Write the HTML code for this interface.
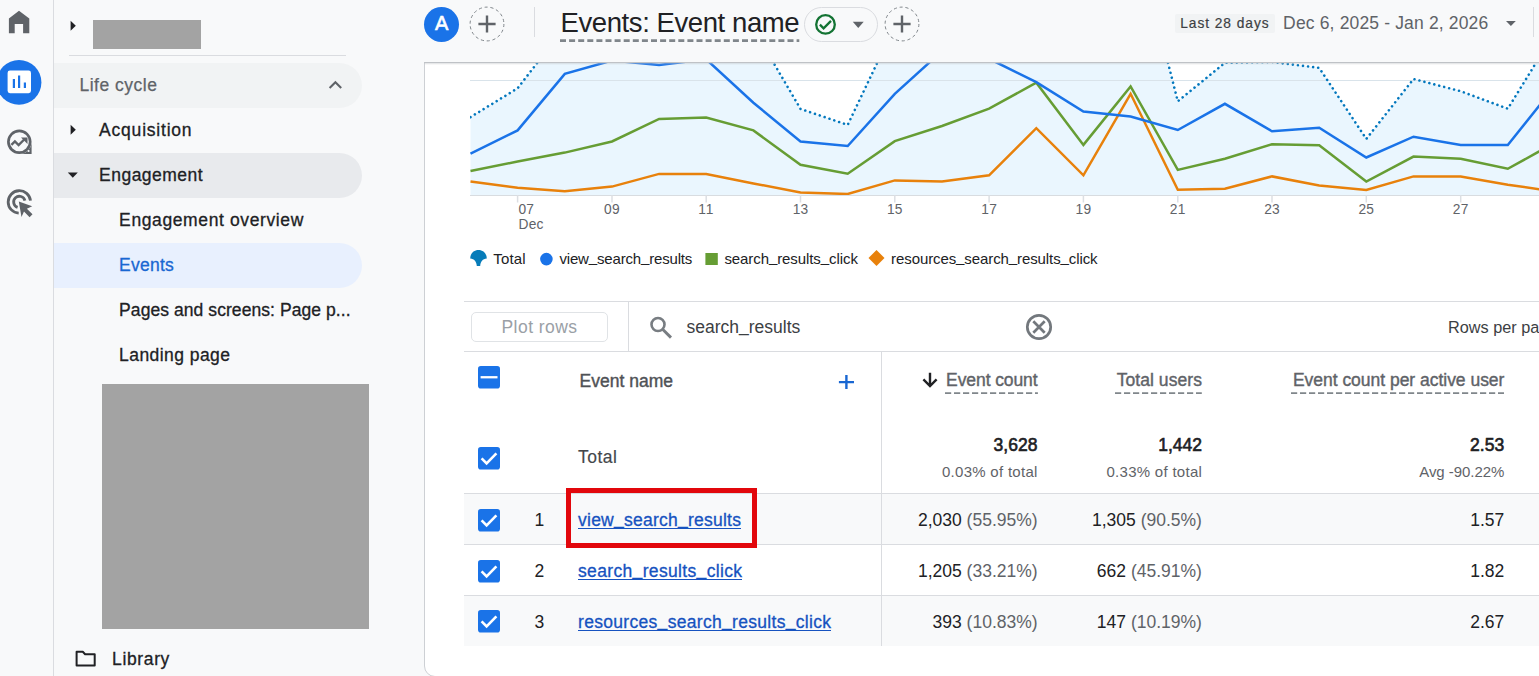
<!DOCTYPE html>
<html lang="en"><head><meta charset="utf-8"><title>Events: Event name</title>
<style>
html,body{margin:0;padding:0}
body{width:1539px;height:676px;overflow:hidden;position:relative;background:#f8f9fa;font-family:'Liberation Sans',sans-serif;}
div,svg{box-sizing:border-box}
a{color:inherit}
</style></head><body>
<div style="position:absolute;left:424px;top:-2px;width:1125px;height:679px;background:#fff;border:1px solid #cdd0d4;border-radius:0 0 0 11px"></div>
<svg style="position:absolute;left:0;top:0" width="1539" height="300" viewBox="0 0 1539 300">
<defs><clipPath id="cp"><rect x="470" y="0" width="1069" height="196"/></clipPath></defs>
<line x1="470" x2="1539" y1="80.5" y2="80.5" stroke="#e4e6e9" stroke-width="1"/>
<g clip-path="url(#cp)">
<polygon points="470.5,117.1 517.6,88.3 564.8,27.0 612.0,10.0 659.1,15.0 706.2,5.0 753.4,28.4 800.5,108.9 847.7,124.9 894.8,25.9 942.0,-20.0 989.1,-30.0 1036.3,-40.0 1083.4,-60.0 1130.6,-84.0 1177.8,101.3 1224.9,62.8 1272.0,62.0 1319.2,67.9 1366.3,138.9 1413.5,79.0 1460.7,91.2 1507.8,108.7 1555.0,31.9 1560,195.5 470.5,195.5" fill="#eaf6fe"/>
<line x1="470" x2="1539" y1="80.5" y2="80.5" stroke="#d9e3ea" stroke-width="1"/>
<polyline points="470.5,117.1 517.6,88.3 564.8,27.0 612.0,10.0 659.1,15.0 706.2,5.0 753.4,28.4 800.5,108.9 847.7,124.9 894.8,25.9 942.0,-20.0 989.1,-30.0 1036.3,-40.0 1083.4,-60.0 1130.6,-84.0 1177.8,101.3 1224.9,62.8 1272.0,62.0 1319.2,67.9 1366.3,138.9 1413.5,79.0 1460.7,91.2 1507.8,108.7 1555.0,31.9" fill="none" stroke="#0277bd" stroke-width="2.6" stroke-dasharray="0.01 5.1" stroke-linecap="round" stroke-linejoin="round"/>
<polyline points="470.5,181.5 517.6,187.7 564.8,191.2 612.0,186.6 659.1,173.9 706.2,173.9 753.4,183.4 800.5,192.6 847.7,193.9 894.8,180.4 942.0,181.5 989.1,175.3 1036.3,128.2 1083.4,175.3 1130.6,93.8 1177.8,189.7 1224.9,188.8 1272.0,176.4 1319.2,185.5 1366.3,189.9 1413.5,176.4 1460.7,176.4 1507.8,184.8 1555.0,191.4" fill="none" stroke="#e8810b" stroke-width="2.5" stroke-linejoin="miter"/>
<polyline points="470.5,171.0 517.6,161.5 564.8,152.6 612.0,141.5 659.1,118.9 706.2,117.6 753.4,130.4 800.5,164.8 847.7,173.7 894.8,141.1 942.0,126.0 989.1,108.7 1036.3,82.7 1083.4,144.9 1130.6,86.5 1177.8,169.9 1224.9,158.8 1272.0,144.2 1319.2,145.2 1366.3,181.5 1413.5,156.6 1460.7,158.8 1507.8,168.8 1555.0,142.7" fill="none" stroke="#669d34" stroke-width="2.5" stroke-linejoin="miter"/>
<polyline points="470.5,153.7 517.6,130.4 564.8,73.9 612.0,60.5 659.1,65.0 706.2,59.3 753.4,102.7 800.5,141.5 847.7,146.0 894.8,93.8 942.0,51.1 989.1,58.8 1036.3,82.1 1083.4,111.6 1130.6,116.5 1177.8,130.0 1224.9,103.8 1272.0,131.3 1319.2,127.8 1366.3,157.5 1413.5,136.7 1460.7,145.1 1507.8,145.1 1555.0,86.0" fill="none" stroke="#1a73e8" stroke-width="2.5" stroke-linejoin="miter"/>
</g>
<line x1="470" x2="1539" y1="195.5" y2="195.5" stroke="#d8dce0" stroke-width="1"/>
<line x1="517.6" x2="517.6" y1="195" y2="202.5" stroke="#dcdfe3" stroke-width="1.5"/>
<line x1="612.0" x2="612.0" y1="195" y2="202.5" stroke="#dcdfe3" stroke-width="1.5"/>
<line x1="706.2" x2="706.2" y1="195" y2="202.5" stroke="#dcdfe3" stroke-width="1.5"/>
<line x1="800.5" x2="800.5" y1="195" y2="202.5" stroke="#dcdfe3" stroke-width="1.5"/>
<line x1="894.8" x2="894.8" y1="195" y2="202.5" stroke="#dcdfe3" stroke-width="1.5"/>
<line x1="989.1" x2="989.1" y1="195" y2="202.5" stroke="#dcdfe3" stroke-width="1.5"/>
<line x1="1083.4" x2="1083.4" y1="195" y2="202.5" stroke="#dcdfe3" stroke-width="1.5"/>
<line x1="1177.8" x2="1177.8" y1="195" y2="202.5" stroke="#dcdfe3" stroke-width="1.5"/>
<line x1="1272.0" x2="1272.0" y1="195" y2="202.5" stroke="#dcdfe3" stroke-width="1.5"/>
<line x1="1366.3" x2="1366.3" y1="195" y2="202.5" stroke="#dcdfe3" stroke-width="1.5"/>
<line x1="1460.7" x2="1460.7" y1="195" y2="202.5" stroke="#dcdfe3" stroke-width="1.5"/>
</svg>
<div style="position:absolute;top:202.34px;font-size:13.75px;line-height:16px;color:#5f6368;white-space:pre;left:518.60px;letter-spacing:0.052px;">07</div>
<div style="position:absolute;top:202.34px;font-size:13.75px;line-height:16px;color:#5f6368;white-space:pre;left:604.05px;letter-spacing:0.252px;">09</div>
<div style="position:absolute;top:202.34px;font-size:13.75px;line-height:16px;color:#5f6368;white-space:pre;left:698.35px;letter-spacing:0.759px;">11</div>
<div style="position:absolute;top:202.34px;font-size:13.75px;line-height:16px;color:#5f6368;white-space:pre;left:792.65px;letter-spacing:0.252px;">13</div>
<div style="position:absolute;top:202.34px;font-size:13.75px;line-height:16px;color:#5f6368;white-space:pre;left:886.95px;letter-spacing:0.252px;">15</div>
<div style="position:absolute;top:202.34px;font-size:13.75px;line-height:16px;color:#5f6368;white-space:pre;left:981.25px;letter-spacing:0.252px;">17</div>
<div style="position:absolute;top:202.34px;font-size:13.75px;line-height:16px;color:#5f6368;white-space:pre;left:1075.55px;letter-spacing:0.252px;">19</div>
<div style="position:absolute;top:202.34px;font-size:13.75px;line-height:16px;color:#5f6368;white-space:pre;left:1169.85px;letter-spacing:0.252px;">21</div>
<div style="position:absolute;top:202.34px;font-size:13.75px;line-height:16px;color:#5f6368;white-space:pre;left:1264.15px;letter-spacing:0.252px;">23</div>
<div style="position:absolute;top:202.34px;font-size:13.75px;line-height:16px;color:#5f6368;white-space:pre;left:1358.45px;letter-spacing:0.252px;">25</div>
<div style="position:absolute;top:202.34px;font-size:13.75px;line-height:16px;color:#5f6368;white-space:pre;left:1452.75px;letter-spacing:0.252px;">27</div>
<div style="position:absolute;top:217.34px;font-size:13.75px;line-height:16px;color:#5f6368;white-space:pre;left:518.60px;letter-spacing:0.116px;">Dec</div>
<svg style="position:absolute;left:468px;top:248px" width="640" height="22" viewBox="468 248 640 22">
<path d="M470.2 258.5C470.2 253.6 473.9 250.1 478.5 250.1C483.1 250.1 486.8 253.6 486.8 258.5C482.6 258.9 480.6 261.4 480.2 265.9L476.8 265.9C476.4 261.4 474.4 258.9 470.2 258.5Z" fill="#077cb9"/>
<circle cx="546.4" cy="259.1" r="6.3" fill="#1a73e8"/>
<rect x="705.4" y="253" width="12.4" height="12" fill="#669d34"/>
<path d="M876.5 250l8 8-8 8-8-8z" fill="#e8810b"/>
</svg>
<div style="position:absolute;top:249.60px;font-size:15px;line-height:18px;color:#202124;white-space:pre;left:493.30px;letter-spacing:0.142px;">Total</div>
<div style="position:absolute;top:249.60px;font-size:15px;line-height:18px;color:#202124;white-space:pre;left:559.40px;letter-spacing:-0.163px;">view<span style="position:relative;top:-1.8px">_</span>search<span style="position:relative;top:-1.8px">_</span>results</div>
<div style="position:absolute;top:249.60px;font-size:15px;line-height:18px;color:#202124;white-space:pre;left:724.40px;letter-spacing:-0.083px;">search<span style="position:relative;top:-1.8px">_</span>results<span style="position:relative;top:-1.8px">_</span>click</div>
<div style="position:absolute;top:249.60px;font-size:15px;line-height:18px;color:#202124;white-space:pre;left:891.10px;letter-spacing:-0.096px;">resources<span style="position:relative;top:-1.8px">_</span>search<span style="position:relative;top:-1.8px">_</span>results<span style="position:relative;top:-1.8px">_</span>click</div>
<div style="position:absolute;left:389px;top:0;width:1150px;height:62px;background:#f8f9fa"></div>
<div style="position:absolute;left:384px;top:62px;width:1155px;height:1px;background:linear-gradient(90deg,rgba(190,193,197,0) 0,rgba(190,193,197,.55) 39px,#bfc2c6 41px)"></div>
<div style="position:absolute;left:384px;top:63px;width:1155px;height:1px;background:linear-gradient(90deg,rgba(190,193,197,0) 0,rgba(190,193,197,.22) 39px,rgba(190,193,197,.38) 41px)"></div>
<div style="position:absolute;left:425px;top:64px;width:1114px;height:1px;background:rgba(190,193,197,.13)"></div>
<div style="position:absolute;left:0;top:0;width:424px;height:70px;background:#f8f9fa"></div>
<div style="position:absolute;left:423.8px;top:6.8px;width:35.2px;height:35.2px;border-radius:50%;background:#1a73e8"></div>
<div style="position:absolute;top:11.27px;font-size:20px;line-height:24px;color:#fff;white-space:pre;left:434.90px;letter-spacing:0.156px;-webkit-text-stroke:0.6px #fff;">A</div>
<svg style="position:absolute;left:466.5px;top:4.300000000000001px" width="40" height="40" viewBox="-20 -20 40 40">
<circle r="16.9" fill="none" stroke="#80868b" stroke-width="1" stroke-dasharray="3.1 2.8"/>
<path d="M-8.6 0H8.6M0 -8.6V8.6" stroke="#5f6368" stroke-width="2.4" fill="none"/></svg>
<svg style="position:absolute;left:881.5px;top:4.399999999999999px" width="40" height="40" viewBox="-20 -20 40 40">
<circle r="16.9" fill="none" stroke="#80868b" stroke-width="1" stroke-dasharray="3.1 2.8"/>
<path d="M-8.6 0H8.6M0 -8.6V8.6" stroke="#5f6368" stroke-width="2.4" fill="none"/></svg>
<div style="position:absolute;left:534px;top:7px;width:1px;height:30px;background:#dadce0"></div>
<div style="position:absolute;top:5.97px;font-size:27.5px;line-height:33px;color:#202124;white-space:pre;left:560.60px;letter-spacing:-0.417px;">Events: Event name</div>
<svg style="position:absolute;left:559.9px;top:38.8px" width="240" height="4"><line x1="0" x2="239.3" y1="1.6" y2="1.6" stroke="#80868b" stroke-width="2.8" stroke-dasharray="6 3.1"/></svg>
<div style="position:absolute;left:803.9px;top:7.1px;width:74.4px;height:34.8px;border:1px solid #dadce0;border-radius:18px"></div>
<svg style="position:absolute;left:812px;top:11px" width="60" height="28" viewBox="812 11 60 28">
<circle cx="825.5" cy="24.4" r="9.3" fill="none" stroke="#137333" stroke-width="2.3"/>
<path d="M819.9 24.6l3.7 3.7 7.4-7.4" fill="none" stroke="#137333" stroke-width="2.3"/>
<path d="M852.8 21.8h10.9l-5.45 6.1z" fill="#5f6368"/></svg>
<div style="position:absolute;left:1175.3px;top:13.5px;width:99.7px;height:19.4px;background:#f1f3f4;border-radius:2px"></div>
<div style="position:absolute;top:15.84px;font-size:13.75px;line-height:16px;color:#3c4043;white-space:pre;left:1180.20px;letter-spacing:0.953px;-webkit-text-stroke:0.18px #3c4043;">Last 28 days</div>
<div style="position:absolute;top:12.84px;font-size:17.5px;line-height:21px;color:#5f6368;white-space:pre;left:1283.10px;letter-spacing:0.156px;">Dec 6, 2025 - Jan 2, 2026</div>
<svg style="position:absolute;left:1504px;top:19px" width="14" height="9" viewBox="1504 19 14 9"><path d="M1506 20.9h9.8l-4.9 5z" fill="#5f6368"/></svg>
<div style="position:absolute;left:1533px;top:7px;width:1px;height:30px;background:#dadce0"></div>
<div style="position:absolute;left:53px;top:0px;width:1px;height:676px;background:#dadce0"></div>
<svg style="position:absolute;left:0;top:0" width="53" height="230" viewBox="0 0 53 230">
<path d="M19 10.7L29.3 18.6V33.2H23.1V24H14.7V33.2H8.9V18.6Z" fill="#5f6368"/>
<circle cx="19" cy="82.4" r="22.4" fill="#1a73e8"/>
<rect x="7.6" y="70.6" width="23.4" height="22.6" rx="2.4" fill="#fff"/>
<path d="M13.9 79v8.9M19.1 75.4v12.5M24.9 82.5v5.4" stroke="#1a73e8" stroke-width="2.2" fill="none"/>
<circle cx="19.3" cy="141.8" r="10.9" fill="none" stroke="#5f6368" stroke-width="2.7"/>
<path d="M31.6 143.5V154H21.2A12.3 12.3 0 0 0 31.6 143.5Z" fill="#5f6368"/>
<circle cx="28.6" cy="151" r="1.05" fill="#f8f9fa"/>
<path d="M11.4 144.8l3.5-3.3 3.7 3.6 5.6-5.6" fill="none" stroke="#5f6368" stroke-width="2.4"/>
<path d="M21 137.4h6.5v6.5z" fill="#5f6368"/>
<g fill="none" stroke="#5f6368" stroke-width="2.8">
<path d="M18.7 213.1a11.2 11.2 0 1 1 11.8-12.4"/>
<path d="M17.6 207.4a5.7 5.7 0 1 1 7.3-6.8"/>
</g>
<path d="M18.8 201.4l13.4 4.8-5.3 2.5 5.6 5.6-2.9 2.9-5.6-5.6-2.5 5.3z" fill="#5f6368"/>
</svg>
<svg style="position:absolute;left:70px;top:20px" width="8" height="12"><path d="M0.6 0.8l5.2 5-5.2 5z" fill="#202124"/></svg>
<div style="position:absolute;left:93px;top:20px;width:108px;height:29px;background:#a3a3a3"></div>
<div style="position:absolute;left:69px;top:55px;width:277px;height:1px;background:#dadce0"></div>
<div style="position:absolute;left:54px;top:63px;width:307.7px;height:44.7px;background:#f1f3f4;border-radius:0 23px 23px 0"></div>
<div style="position:absolute;top:75.34px;font-size:17.5px;line-height:21px;color:#5f6368;white-space:pre;left:79.40px;letter-spacing:0.505px;-webkit-text-stroke:0.25px #5f6368;">Life cycle</div>
<svg style="position:absolute;left:326px;top:78px" width="20" height="14" viewBox="326 78 20 14"><path d="M329.6 88l5.8-5.8 5.8 5.8" fill="none" stroke="#5f6368" stroke-width="2.1"/></svg>
<svg style="position:absolute;left:70px;top:124px" width="8" height="12"><path d="M0.6 0.8l5.2 5-5.2 5z" fill="#202124"/></svg>
<div style="position:absolute;top:120.34px;font-size:17.5px;line-height:21px;color:#202124;white-space:pre;left:99.10px;letter-spacing:0.787px;-webkit-text-stroke:0.3px #202124;">Acquisition</div>
<div style="position:absolute;left:54px;top:153px;width:307.7px;height:44.7px;background:#e8eaed;border-radius:0 23px 23px 0"></div>
<svg style="position:absolute;left:67px;top:172px" width="12" height="8"><path d="M0.8 0.6h10l-5 5.2z" fill="#202124"/></svg>
<div style="position:absolute;top:165.34px;font-size:17.5px;line-height:21px;color:#202124;white-space:pre;left:99.10px;letter-spacing:0.475px;-webkit-text-stroke:0.3px #202124;">Engagement</div>
<div style="position:absolute;top:210.34px;font-size:17.5px;line-height:21px;color:#202124;white-space:pre;left:119.10px;letter-spacing:0.613px;-webkit-text-stroke:0.3px #202124;">Engagement overview</div>
<div style="position:absolute;left:54px;top:243px;width:307.7px;height:44.7px;background:#e8f0fe;border-radius:0 23px 23px 0"></div>
<div style="position:absolute;top:255.34px;font-size:17.5px;line-height:21px;color:#1967d2;white-space:pre;left:119.10px;letter-spacing:0.250px;-webkit-text-stroke:0.3px #1967d2;">Events</div>
<div style="position:absolute;top:300.34px;font-size:17.5px;line-height:21px;color:#202124;white-space:pre;left:119.10px;letter-spacing:0.068px;-webkit-text-stroke:0.3px #202124;">Pages and screens: Page p...</div>
<div style="position:absolute;top:345.34px;font-size:17.5px;line-height:21px;color:#202124;white-space:pre;left:119.10px;letter-spacing:0.435px;-webkit-text-stroke:0.3px #202124;">Landing page</div>
<div style="position:absolute;left:102px;top:384px;width:267px;height:245px;background:#a3a3a3"></div>
<svg style="position:absolute;left:74px;top:648px" width="24" height="22" viewBox="74 648 24 22"><path d="M76.6 651.8h6.2l2.3 2.4h9.6v11.2h-18.1z" fill="none" stroke="#202124" stroke-width="2" stroke-linejoin="round"/></svg>
<div style="position:absolute;top:649.34px;font-size:17.5px;line-height:21px;color:#202124;white-space:pre;left:112.00px;letter-spacing:0.643px;-webkit-text-stroke:0.3px #202124;">Library</div>
<div style="position:absolute;left:464px;top:301px;width:1075px;height:1px;background:#dadce0"></div>
<div style="position:absolute;left:464px;top:351px;width:1075px;height:1px;background:#dadce0"></div>
<div style="position:absolute;left:628px;top:301px;width:1px;height:50px;background:#dadce0"></div>
<div style="position:absolute;left:471px;top:312.3px;width:137px;height:29.4px;border:1px solid #e0e3e6;border-radius:5px"></div>
<div style="position:absolute;top:317.44px;font-size:17.5px;line-height:21px;color:#9aa0a6;white-space:pre;left:501.50px;letter-spacing:0.448px;">Plot rows</div>
<svg style="position:absolute;left:648px;top:315px" width="26" height="25" viewBox="648 315 26 25"><circle cx="658" cy="324.5" r="6.5" fill="none" stroke="#787d82" stroke-width="2.6"/><path d="M662.6 329.2l8.4 8.4" stroke="#787d82" stroke-width="2.9" fill="none"/></svg>
<div style="position:absolute;top:317.44px;font-size:17.5px;line-height:21px;color:#3c4043;white-space:pre;left:686.40px;letter-spacing:0.013px;">search<span style="position:relative;top:-2.2px">_</span>results</div>
<svg style="position:absolute;left:1023.5px;top:311.7px" width="30" height="30" viewBox="-15 -15 30 30"><circle r="11.7" fill="none" stroke="#73787d" stroke-width="2.7"/><path d="M-5.7 -5.7L5.7 5.7M5.7 -5.7L-5.7 5.7" stroke="#73787d" stroke-width="2.7"/></svg>
<div style="position:absolute;top:316.97px;font-size:16.25px;line-height:20px;color:#3c4043;white-space:pre;left:1448.00px;">Rows per page:</div>
<div style="position:absolute;left:464px;top:493px;width:1075px;height:1px;background:#dadce0"></div>
<div style="position:absolute;left:464px;top:494px;width:1075px;height:50px;background:#f8f9fa"></div>
<div style="position:absolute;left:464px;top:544px;width:1075px;height:1px;background:#dadce0"></div>
<div style="position:absolute;left:464px;top:595px;width:1075px;height:1px;background:#dadce0"></div>
<div style="position:absolute;left:464px;top:596px;width:1075px;height:50px;background:#f8f9fa"></div>
<div style="position:absolute;left:881px;top:352px;width:1px;height:294px;background:#dadce0"></div>
<svg style="position:absolute;left:478px;top:366px" width="22" height="23" viewBox="0 0 22 23"><rect x="0" y="0" width="22" height="22.6" rx="2.8" fill="#1a73e8"/><rect x="2.6" y="10.1" width="16.9" height="2.3" fill="#fff"/></svg>
<svg style="position:absolute;left:478px;top:447px" width="22" height="23" viewBox="0 0 22 23"><rect x="0" y="0" width="22" height="22.6" rx="2.8" fill="#1a73e8"/><path d="M3.6 11.4l5 5L18.4 6.4" fill="none" stroke="#fff" stroke-width="2.6"/></svg>
<svg style="position:absolute;left:478px;top:508.5px" width="22" height="23" viewBox="0 0 22 23"><rect x="0" y="0" width="22" height="22.6" rx="2.8" fill="#1a73e8"/><path d="M3.6 11.4l5 5L18.4 6.4" fill="none" stroke="#fff" stroke-width="2.6"/></svg>
<svg style="position:absolute;left:478px;top:559.5px" width="22" height="23" viewBox="0 0 22 23"><rect x="0" y="0" width="22" height="22.6" rx="2.8" fill="#1a73e8"/><path d="M3.6 11.4l5 5L18.4 6.4" fill="none" stroke="#fff" stroke-width="2.6"/></svg>
<svg style="position:absolute;left:478px;top:610.2px" width="22" height="23" viewBox="0 0 22 23"><rect x="0" y="0" width="22" height="22.6" rx="2.8" fill="#1a73e8"/><path d="M3.6 11.4l5 5L18.4 6.4" fill="none" stroke="#fff" stroke-width="2.6"/></svg>
<div style="position:absolute;top:370.64px;font-size:17.5px;line-height:21px;color:#4f5256;white-space:pre;left:579.50px;letter-spacing:0.021px;-webkit-text-stroke:0.4px #4f5256;">Event name</div>
<svg style="position:absolute;left:836px;top:372px" width="20" height="20" viewBox="836 372 20 20"><path d="M838.9 382.1h15.1M846.4 375.1v14" stroke="#1967d2" stroke-width="2.4" fill="none"/></svg>
<svg style="position:absolute;left:920px;top:370px" width="20" height="20" viewBox="920 370 20 20"><path d="M930 372.7v13M923.4 379.4l6.6 6.6 6.6-6.6" stroke="#202124" stroke-width="2.4" fill="none"/></svg>
<div style="position:absolute;top:370.24px;font-size:17.5px;line-height:21px;color:#5f6368;white-space:pre;right:501.49px;letter-spacing:-0.093px;-webkit-text-stroke:0.4px #5f6368;">Event count</div>
<svg style="position:absolute;left:944.6999999999999px;top:392px" width="93.4" height="3"><line x1="0" x2="92.9" y1="1.2" y2="1.2" stroke="#80868b" stroke-width="1.8" stroke-dasharray="6.2 2.8"/></svg>
<div style="position:absolute;top:370.24px;font-size:17.5px;line-height:21px;color:#5f6368;white-space:pre;right:337.04px;letter-spacing:0.061px;-webkit-text-stroke:0.4px #5f6368;">Total users</div>
<svg style="position:absolute;left:1115.1000000000001px;top:392px" width="87.3" height="3"><line x1="0" x2="86.8" y1="1.2" y2="1.2" stroke="#80868b" stroke-width="1.8" stroke-dasharray="6.2 2.8"/></svg>
<div style="position:absolute;top:370.24px;font-size:17.5px;line-height:21px;color:#5f6368;white-space:pre;right:34.62px;letter-spacing:-0.021px;-webkit-text-stroke:0.4px #5f6368;">Event count per active user</div>
<svg style="position:absolute;left:1291.4px;top:392px" width="213.5" height="3"><line x1="0" x2="213.0" y1="1.2" y2="1.2" stroke="#80868b" stroke-width="1.8" stroke-dasharray="6.2 2.8"/></svg>
<div style="position:absolute;top:446.74px;font-size:17.5px;line-height:21px;color:#44474b;white-space:pre;left:578.00px;letter-spacing:0.506px;-webkit-text-stroke:0.15px #44474b;">Total</div>
<div style="position:absolute;top:435.04px;font-size:17.5px;line-height:21px;color:#202124;white-space:pre;right:501.60px;letter-spacing:0.001px;-webkit-text-stroke:0.6px #202124;">3,628</div>
<div style="position:absolute;top:435.04px;font-size:17.5px;line-height:21px;color:#202124;white-space:pre;right:337.16px;letter-spacing:-0.059px;-webkit-text-stroke:0.6px #202124;">1,442</div>
<div style="position:absolute;top:435.04px;font-size:17.5px;line-height:21px;color:#202124;white-space:pre;right:34.59px;letter-spacing:0.109px;-webkit-text-stroke:0.6px #202124;">2.53</div>
<div style="position:absolute;top:463.40px;font-size:15px;line-height:18px;color:#5f6368;white-space:pre;right:501.31px;letter-spacing:0.290px;">0.03% of total</div>
<div style="position:absolute;top:463.40px;font-size:15px;line-height:18px;color:#5f6368;white-space:pre;right:336.81px;letter-spacing:0.290px;">0.33% of total</div>
<div style="position:absolute;top:463.40px;font-size:15px;line-height:18px;color:#5f6368;white-space:pre;right:34.76px;letter-spacing:-0.057px;">Avg -90.22%</div>
<div style="position:absolute;top:510.04px;font-size:17.5px;line-height:21px;color:#202124;white-space:pre;left:534.50px;">1</div>
<div style="position:absolute;top:510.04px;font-size:17.5px;line-height:21px;color:#1652c0;white-space:pre;left:578.00px;letter-spacing:0.245px;-webkit-text-stroke:0.3px #1652c0;">view<span style="position:relative;top:-2.2px">_</span>search<span style="position:relative;top:-2.2px">_</span>results</div>
<div style="position:absolute;left:578px;top:527.5px;width:162.79999999999998px;height:1.8px;background:#1652c0"></div>
<div style="position:absolute;top:510.04px;font-size:17.5px;line-height:21px;color:#5f6368;white-space:pre;right:501.40px;"><span style="color:#202124">2,030</span> (55.95%)</div>
<div style="position:absolute;top:510.04px;font-size:17.5px;line-height:21px;color:#5f6368;white-space:pre;right:337.10px;"><span style="color:#202124">1,305</span> (90.5%)</div>
<div style="position:absolute;top:510.04px;font-size:17.5px;line-height:21px;color:#202124;white-space:pre;right:34.70px;">1.57</div>
<div style="position:absolute;top:561.04px;font-size:17.5px;line-height:21px;color:#202124;white-space:pre;left:534.50px;">2</div>
<div style="position:absolute;top:561.04px;font-size:17.5px;line-height:21px;color:#1652c0;white-space:pre;left:578.00px;letter-spacing:0.342px;-webkit-text-stroke:0.3px #1652c0;">search<span style="position:relative;top:-2.2px">_</span>results<span style="position:relative;top:-2.2px">_</span>click</div>
<div style="position:absolute;left:578px;top:578.5px;width:164.0px;height:1.8px;background:#1652c0"></div>
<div style="position:absolute;top:561.04px;font-size:17.5px;line-height:21px;color:#5f6368;white-space:pre;right:501.40px;"><span style="color:#202124">1,205</span> (33.21%)</div>
<div style="position:absolute;top:561.04px;font-size:17.5px;line-height:21px;color:#5f6368;white-space:pre;right:337.10px;"><span style="color:#202124">662</span> (45.91%)</div>
<div style="position:absolute;top:561.04px;font-size:17.5px;line-height:21px;color:#202124;white-space:pre;right:34.70px;">1.82</div>
<div style="position:absolute;top:612.04px;font-size:17.5px;line-height:21px;color:#202124;white-space:pre;left:534.50px;">3</div>
<div style="position:absolute;top:612.04px;font-size:17.5px;line-height:21px;color:#1652c0;white-space:pre;left:578.00px;letter-spacing:0.305px;-webkit-text-stroke:0.3px #1652c0;">resources<span style="position:relative;top:-2.2px">_</span>search<span style="position:relative;top:-2.2px">_</span>results<span style="position:relative;top:-2.2px">_</span>click</div>
<div style="position:absolute;left:578px;top:629.5px;width:252.9px;height:1.8px;background:#1652c0"></div>
<div style="position:absolute;top:612.04px;font-size:17.5px;line-height:21px;color:#5f6368;white-space:pre;right:501.40px;"><span style="color:#202124">393</span> (10.83%)</div>
<div style="position:absolute;top:612.04px;font-size:17.5px;line-height:21px;color:#5f6368;white-space:pre;right:337.10px;"><span style="color:#202124">147</span> (10.19%)</div>
<div style="position:absolute;top:612.04px;font-size:17.5px;line-height:21px;color:#202124;white-space:pre;right:34.70px;">2.67</div>
<div style="position:absolute;left:566.2px;top:488.2px;width:190.4px;height:59.4px;border:5px solid #e2070c"></div>
</body></html>
